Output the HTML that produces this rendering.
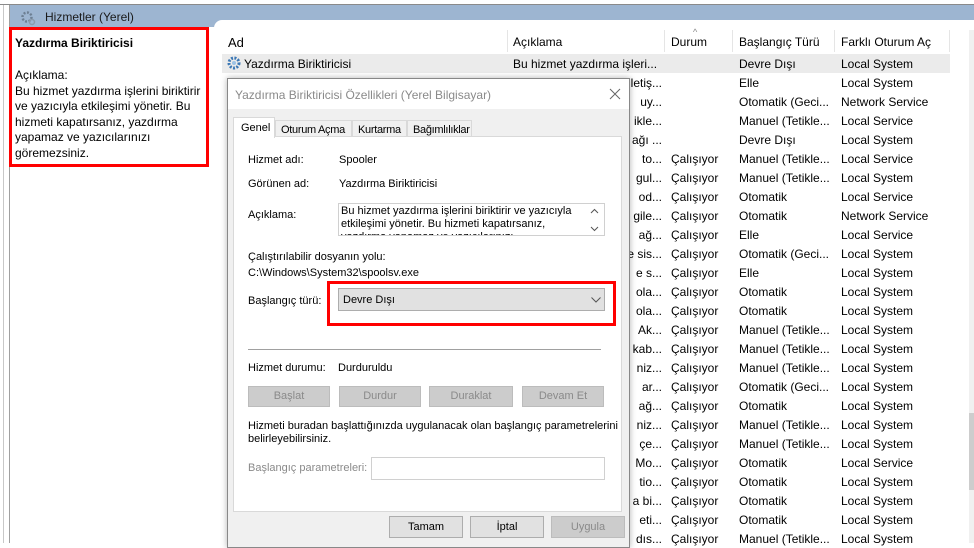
<!DOCTYPE html>
<html><head><meta charset="utf-8"><style>
*{margin:0;padding:0;box-sizing:border-box}
body{width:974px;height:543px;overflow:hidden;background:#fff;font-family:"Liberation Sans",sans-serif;font-size:12px;color:#000;position:relative}
.a{position:absolute;white-space:nowrap}
.row{position:absolute;left:222px;width:728px;height:19px}
.dlg{font-size:11px}
.btn{position:absolute;height:21px;background:#cccccc;border:1px solid #bcbcbc;color:#8a8a8a;text-align:center;line-height:19px;font-size:11px}
.btn2{position:absolute;height:22px;background:#e1e1e1;border:1px solid #adadad;text-align:center;line-height:20px;font-size:11px}
</style></head><body>
<div class="a" style="left:0;top:4px;width:974px;height:1px;background:#8a8a8a"></div>
<div class="a" style="left:9px;top:5px;width:965px;height:22px;background:#9db5d1"></div>
<div class="a" style="left:3px;top:5px;width:1px;height:538px;background:#c8c8c8"></div>
<div class="a" style="left:9px;top:5px;width:1px;height:538px;background:#a0a0a0"></div>
<svg class="a" style="left:20px;top:10px" width="16" height="16" viewBox="0 0 16 16"><circle cx="7" cy="7" r="4.5" fill="none" stroke="#6d7f93" stroke-width="2.5" stroke-dasharray="2 1.5"/><circle cx="12" cy="12" r="2.5" fill="none" stroke="#8a9aab" stroke-width="1.5"/></svg>
<div class="a" style="left:45px;top:10px;font-size:12px;color:#1a1a1a">Hizmetler (Yerel)</div>
<div class="a" style="left:214px;top:20px;width:760px;height:523px;background:#fff;border-top-left-radius:8px"></div>
<div class="a" style="left:10px;top:27px;width:203px;height:516px;background:#fff"></div>
<div class="a" style="left:9px;top:27px;width:200px;height:140px;border:3px solid #f00"></div>
<div class="a" style="left:15px;top:36px;font-weight:bold">Yazdırma Biriktiricisi</div>
<div class="a" style="left:15px;top:68px;line-height:15.5px;white-space:normal;width:190px">Açıklama:<br>Bu hizmet yazdırma işlerini biriktirir ve yazıcıyla etkileşimi yönetir. Bu hizmeti kapatırsanız, yazdırma yapamaz ve yazıcılarınızı göremezsiniz.</div>
<div class="a" style="left:228px;top:35px;font-size:13px">Ad</div>
<div class="a" style="left:513px;top:35px">Açıklama</div>
<div class="a" style="left:671px;top:35px">Durum</div>
<div class="a" style="left:693px;top:27px;font-size:9px;color:#888">^</div>
<div class="a" style="left:739px;top:35px">Başlangıç Türü</div>
<div class="a" style="left:841px;top:35px">Farklı Oturum Aç</div>
<div class="a" style="left:507px;top:30px;width:1px;height:22px;background:#e5e5e5"></div>
<div class="a" style="left:664px;top:30px;width:1px;height:22px;background:#e5e5e5"></div>
<div class="a" style="left:732px;top:30px;width:1px;height:22px;background:#e5e5e5"></div>
<div class="a" style="left:834px;top:30px;width:1px;height:22px;background:#e5e5e5"></div>
<div class="a" style="left:949px;top:30px;width:1px;height:22px;background:#e5e5e5"></div>
<div class="a" style="left:969px;top:30px;width:5px;height:513px;background:#f0f0f0"></div>
<div class="a" style="left:969px;top:413px;width:5px;height:77px;background:#cdcdcd"></div>
<div class="row" style="top:54px;background:#ebebeb"></div>
<svg class="a" style="left:226px;top:55px" width="16" height="16" viewBox="0 0 16 16"><circle cx="8" cy="8" r="5" fill="none" stroke="#3c78b5" stroke-width="3" stroke-dasharray="2 1.4"/><circle cx="8" cy="8" r="2" fill="#9cc2e5"/></svg>
<div class="a" style="left:244px;top:57px">Yazdırma Biriktiricisi</div>
<div id="rows"></div>
<script>
var d=[["Bu hizmet yazdırma işleri...","","Devre Dışı","Local System"],["letiş...","","Elle","Local System"],["uy...","","Otomatik (Geci...","Network Service"],["ikle...","","Manuel (Tetikle...","Local Service"],["ağı ...","","Devre Dışı","Local System"],["to...","Çalışıyor","Manuel (Tetikle...","Local Service"],["gul...","Çalışıyor","Manuel (Tetikle...","Local System"],["od...","Çalışıyor","Otomatik","Local Service"],["gile...","Çalışıyor","Otomatik","Network Service"],["ağ...","Çalışıyor","Elle","Local Service"],["e sis...","Çalışıyor","Otomatik (Geci...","Local System"],["e s...","Çalışıyor","Elle","Local System"],["ola...","Çalışıyor","Otomatik","Local System"],["ola...","Çalışıyor","Otomatik","Local System"],["Ak...","Çalışıyor","Manuel (Tetikle...","Local System"],["kab...","Çalışıyor","Manuel (Tetikle...","Local System"],["niz...","Çalışıyor","Manuel (Tetikle...","Local System"],["ar...","Çalışıyor","Otomatik (Geci...","Local System"],["ağ...","Çalışıyor","Otomatik","Local System"],["niz...","Çalışıyor","Manuel (Tetikle...","Local System"],["çe...","Çalışıyor","Manuel (Tetikle...","Local System"],["Mo...","Çalışıyor","Otomatik","Local Service"],["tio...","Çalışıyor","Otomatik","Local System"],["a bi...","Çalışıyor","Otomatik","Local System"],["eti...","Çalışıyor","Otomatik","Local System"],["dıs...","Çalışıyor","Manuel (Tetikle...","Local System"]];
var h="";d.forEach(function(r,i){var y=55+i*19;
if(i==0)h+='<div class="a" style="left:513px;top:'+(y+2)+'px">'+r[0]+'</div>';
else h+='<div class="a" style="right:312px;top:'+(y+2)+'px">'+r[0]+'</div>';
h+='<div class="a" style="left:671px;top:'+(y+2)+'px">'+r[1]+'</div>';
h+='<div class="a" style="left:739px;top:'+(y+2)+'px">'+r[2]+'</div>';
h+='<div class="a" style="left:841px;top:'+(y+2)+'px">'+r[3]+'</div>';});
document.getElementById('rows').innerHTML=h;
</script>
<div class="a dlg" style="left:227px;top:78px;width:403px;height:470px;background:#f0f0f0;border:1px solid #888;box-shadow:0 0 6px rgba(0,0,0,.3)">
 <div class="a" style="left:0;top:0;width:401px;height:30px;background:#fff"></div>
 <div class="a" style="left:7px;top:9px;font-size:12px;color:#8a8a8a">Yazdırma Biriktiricisi Özellikleri (Yerel Bilgisayar)</div>
 <svg class="a" style="left:381px;top:9px" width="12" height="12"><path d="M1 1L11 11M11 1L1 11" stroke="#666" stroke-width="1"/></svg>
 <div class="a" style="left:5px;top:57px;width:389px;height:376px;background:#fff;border:1px solid #d9d9d9"></div>
 <div class="a" style="left:5px;top:38px;width:42px;height:21px;background:#fff;border:1px solid #d9d9d9;border-bottom:none;padding:4px 0 0 7px">Genel</div>
 <div class="a" style="left:47px;top:41px;width:77px;height:17px;background:#f0f0f0;border:1px solid #d9d9d9;padding:3px 0 0 5px;letter-spacing:-0.3px">Oturum Açma</div>
 <div class="a" style="left:124px;top:41px;width:55px;height:17px;background:#f0f0f0;border:1px solid #d9d9d9;padding:3px 0 0 5px;letter-spacing:-0.3px">Kurtarma</div>
 <div class="a" style="left:179px;top:41px;width:65px;height:17px;background:#f0f0f0;border:1px solid #d9d9d9;padding:3px 0 0 5px;letter-spacing:-0.3px">Bağımlılıklar</div>
 <div class="a" style="left:20px;top:75px">Hizmet adı:</div>
 <div class="a" style="left:111px;top:75px">Spooler</div>
 <div class="a" style="left:20px;top:99px">Görünen ad:</div>
 <div class="a" style="left:111px;top:99px">Yazdırma Biriktiricisi</div>
 <div class="a" style="left:20px;top:130px">Açıklama:</div>
 <div class="a" style="left:110px;top:124px;width:267px;height:33px;border:1px solid #d0d0d0;overflow:hidden;white-space:normal;line-height:13px;padding:1px 20px 0 2px">Bu hizmet yazdırma işlerini biriktirir ve yazıcıyla etkileşimi yönetir. Bu hizmeti kapatırsanız, yazdırma yapamaz ve yazıcılarınızı göremezsiniz.</div>
 <svg class="a" style="left:362px;top:129px" width="9" height="25"><path d="M1 5L4.5 1.5L8 5M1 19L4.5 22.5L8 19" fill="none" stroke="#555"/></svg>
 <div class="a" style="left:20px;top:172px">Çalıştırılabilir dosyanın yolu:</div>
 <div class="a" style="left:20px;top:188px">C:\Windows\System32\spoolsv.exe</div>
 <div class="a" style="left:20px;top:216px">Başlangıç türü:</div>
 <div class="a" style="left:99px;top:202px;width:289px;height:45px;border:3px solid #f00"></div>
 <div class="a" style="left:110px;top:209px;width:267px;height:23px;background:#e1e1e1;border:1px solid #adadad;padding:5px 0 0 4px">Devre Dışı</div>
 <svg class="a" style="left:363px;top:218px" width="10" height="6"><path d="M0.5 0.5L5 5L9.5 0.5" fill="none" stroke="#555"/></svg>
 <div class="a" style="left:20px;top:270px;width:353px;height:1px;background:#a0a0a0"></div>
 <div class="a" style="left:20px;top:283px">Hizmet durumu:</div>
 <div class="a" style="left:110px;top:283px">Durduruldu</div>
 <div class="btn" style="left:20px;top:307px;width:82px">Başlat</div>
 <div class="btn" style="left:111px;top:307px;width:82px">Durdur</div>
 <div class="btn" style="left:201px;top:307px;width:84px">Duraklat</div>
 <div class="btn" style="left:294px;top:307px;width:82px">Devam Et</div>
 <div class="a" style="left:20px;top:341px;line-height:13px">Hizmeti buradan başlattığınızda uygulanacak olan başlangıç parametrelerini<br>belirleyebilirsiniz.</div>
 <div class="a" style="left:20px;top:383px;color:#8a8a8a">Başlangıç parametreleri:</div>
 <div class="a" style="left:143px;top:378px;width:234px;height:23px;background:#fff;border:1px solid #d0d0d0"></div>
 <div class="btn2" style="left:161px;top:437px;width:74px">Tamam</div>
 <div class="btn2" style="left:242px;top:437px;width:74px">İptal</div>
 <div class="btn2" style="left:323px;top:437px;width:74px;background:#ccc;border-color:#bcbcbc;color:#8a8a8a">Uygula</div>
</div>
</body></html>
